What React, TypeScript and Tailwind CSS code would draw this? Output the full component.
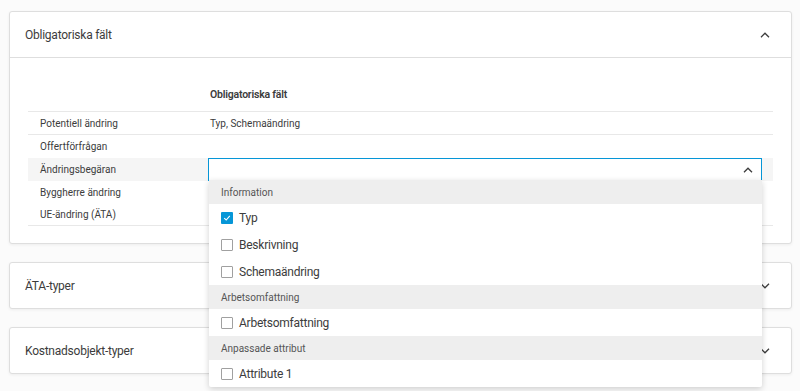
import React from 'react'

const font = { fontFamily: 'Roboto, "Noto Sans", sans-serif' }

function Chevron({ up = false }: { up?: boolean }) {
  return (
    <svg width="10" height="6" viewBox="0 0 10 6" className="text-[#3c3c3c]">
      <polyline
        points={up ? '1,5.2 5,1.2 9,5.2' : '1,0.8 5,4.8 9,0.8'}
        fill="none"
        stroke="currentColor"
        strokeWidth="1.3"
      />
    </svg>
  )
}

function Checkbox({ checked = false }: { checked?: boolean }) {
  if (checked) {
    return (
      <span className="flex h-[12px] w-[12px] items-center justify-center rounded-[1px] bg-[#0696d7]">
        <svg width="8" height="8" viewBox="0 0 8 8">
          <polyline points="1.2,4.2 3.2,6 6.8,1.8" fill="none" stroke="white" strokeWidth="1.1" />
        </svg>
      </span>
    )
  }
  return <span className="h-[12px] w-[12px] rounded-[1px] border border-[#a0a0a0] bg-white" />
}

type Opt = { kind: 'head'; label: string } | { kind: 'item'; label: string; checked?: boolean }

const options: Opt[] = [
  { kind: 'head', label: 'Information' },
  { kind: 'item', label: 'Typ', checked: true },
  { kind: 'item', label: 'Beskrivning' },
  { kind: 'item', label: 'Schemaändring' },
  { kind: 'head', label: 'Arbetsomfattning' },
  { kind: 'item', label: 'Arbetsomfattning' },
  { kind: 'head', label: 'Anpassade attribut' },
  { kind: 'item', label: 'Attribute 1' },
]

function Dropdown() {
  return (
    <div className="absolute left-0 top-full z-10 w-[calc(100%+1px)] rounded-b-[2px] bg-white shadow-[0_2px_6px_rgba(0,0,0,0.18)]">
      {options.map((o, i) =>
        o.kind === 'head' ? (
          <div key={i} className="flex h-[24px] items-center bg-[#eeeeee] pl-[12px] text-[10px] text-[#555]">
            {o.label}
          </div>
        ) : (
          <div key={i} className="flex h-[27px] items-center gap-[6px] pl-[12px] text-[12px] tracking-[-0.02em] text-[#3c3c3c]">
            <Checkbox checked={o.checked} />
            {o.label}
          </div>
        ),
      )}
    </div>
  )
}

const rows = [
  { label: 'Potentiell ändring', value: 'Typ, Schemaändring', cls: 'h-[23px] border-b border-[#e8e8e8]' },
  { label: 'Offertförfrågan', value: '', cls: 'h-[23px]' },
  { label: 'Ändringsbegäran', value: null, cls: 'h-[23px] bg-[#f5f5f5]' },
  { label: 'Byggherre ändring', value: '', cls: 'h-[22px]' },
  { label: 'UE-ändring (ÄTA)', value: '', cls: 'h-[23px] border-b border-[#e8e8e8]' },
]

function Card({ title, open = false, children }: { title: string; open?: boolean; children?: React.ReactNode }) {
  return (
    <div className="rounded-[3px] border border-[#dedede] bg-white shadow-[0_1px_3px_rgba(0,0,0,0.06)]">
      <div
        className={`flex items-center justify-between pl-[15px] pr-[21px] ${open ? 'h-[46px] border-b border-[#dedede]' : 'h-[45px]'}`}
      >
        <span className="text-[12px] tracking-[-0.02em] text-[#3c3c3c]">{title}</span>
        <Chevron up={open} />
      </div>
      {children}
    </div>
  )
}

export default function App() {
  return (
    <div style={font} className="flex h-[391px] w-[800px] flex-col gap-[18px] bg-[#fbfbfb] pl-[9px] pr-[8px] pt-[11px]">
      <Card title="Obligatoriska fält" open>
        <div className="px-[18px] pb-[17px] pt-[24px]">
          <div className="flex h-[30px] items-center border-b border-[#e8e8e8] pb-[4px]">
            <div className="w-[180px]" />
            <div className="pl-[2px] text-[10.5px] font-semibold tracking-[-0.02em] text-[#3c3c3c]">Obligatoriska fält</div>
          </div>
          {rows.map((r) => (
            <div key={r.label} className={`flex items-center text-[10px] text-[#3c3c3c] ${r.cls}`}>
              <div className="w-[180px] pl-[12px]">{r.label}</div>
              <div className="flex-1 self-stretch pr-[11px]">
                {r.value === null ? (
                  <div className="relative flex h-full items-center justify-end border border-[#0696d7] bg-white pr-[8px]">
                    <Chevron up />
                    <Dropdown />
                  </div>
                ) : (
                  <div className="flex h-full items-center pl-[2px]">{r.value}</div>
                )}
              </div>
            </div>
          ))}
        </div>
      </Card>
      <Card title="ÄTA-typer" />
      <Card title="Kostnadsobjekt-typer" />
    </div>
  )
}
